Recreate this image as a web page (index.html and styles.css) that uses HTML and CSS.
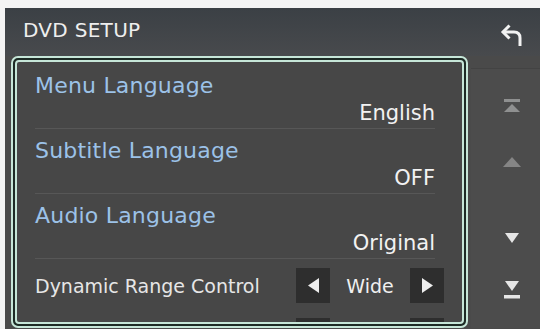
FILE: index.html
```html
<!DOCTYPE html>
<html lang="en">
<head>
  <meta charset="UTF-8" />
  <title>DVD SETUP</title>
  <link rel="stylesheet" href="styles.css">
</head>
<body>
  <div class="screen">
    <header class="header">
      <h1>DVD SETUP</h1>
      <button class="back-btn" aria-label="Back">
        <svg width="26" height="24" viewBox="0 0 26 24">
          <path d="M4 9 H15 Q21 9 21 15 V23" fill="none" stroke="#f2f2f2" stroke-width="3" />
          <path d="M10.5 2.5 L4 9 L10.5 15.5" fill="none" stroke="#f2f2f2" stroke-width="3" />
        </svg>
      </button>
    </header>

    <div class="main">
      <div class="frame">
        <div class="frame-inner">
          <div class="item">
            <div class="label">Menu Language</div>
            <div class="value">English</div>
          </div>
          <div class="item">
            <div class="label">Subtitle Language</div>
            <div class="value">OFF</div>
          </div>
          <div class="item">
            <div class="label">Audio Language</div>
            <div class="value">Original</div>
          </div>
          <div class="item-select">
            <div class="label-small">Dynamic Range Control</div>
            <div class="selector">
              <button class="arrow-btn" aria-label="Previous">
                <svg width="11" height="15" viewBox="0 0 11 15"><path d="M11 0 V15 L0 7.5 Z" fill="#eeeeee"/></svg>
              </button>
              <span class="sel-value">Wide</span>
              <button class="arrow-btn" aria-label="Next">
                <svg width="11" height="15" viewBox="0 0 11 15"><path d="M0 0 V15 L11 7.5 Z" fill="#eeeeee"/></svg>
              </button>
            </div>
          </div>
          <div class="item-select">
            <div class="label-small"></div>
            <div class="selector">
              <button class="arrow-btn"></button>
              <span class="sel-value"></span>
              <button class="arrow-btn"></button>
            </div>
          </div>
        </div>
      </div>

      <div class="scroller">
        <div class="scroll-icon top">
          <svg width="18" height="14" viewBox="0 0 18 14"><rect x="1" y="0" width="16" height="3" fill="#8f9090"/><path d="M9 5 L17 13 H1 Z" fill="#8f9090"/></svg>
        </div>
        <div class="scroll-icon up">
          <svg width="18" height="10" viewBox="0 0 18 10"><path d="M9 0 L18 10 H0 Z" fill="#858585"/></svg>
        </div>
        <div class="scroll-icon down">
          <svg width="14" height="10" viewBox="0 0 14 10"><path d="M0 0 H14 L7 10 Z" fill="#e6e6e6"/></svg>
        </div>
        <div class="scroll-icon bottom">
          <svg width="18" height="18" viewBox="0 0 18 18"><path d="M2 0 H16 L9 10 Z" fill="#e6e6e6"/><rect x="1" y="14" width="16" height="3.5" fill="#e6e6e6"/></svg>
        </div>
      </div>
    </div>
  </div>
</body>
</html>
```

FILE: styles.css
```css
* {
  box-sizing: border-box;
}

body {
  margin: 0;
  background-color: #f4f4f4;
  font-family: "DejaVu Sans", "Open Sans", sans-serif;
  overflow: hidden;
}

.screen {
  margin: 8px 0 0 5px;
  height: 321px;
  background-color: #4a4a4a;
  overflow: hidden;
}

.header {
  height: 48px;
  display: flex;
  align-items: center;
  justify-content: space-between;
  padding: 0 15px 4px 18px;
  background: linear-gradient(#3b4045, #484a4d);
}

.header h1 {
  margin: 0;
  font-size: 20px;
  font-weight: 400;
  color: #eeeeee;
  letter-spacing: 0.3px;
}

.back-btn {
  border: none;
  background: none;
  padding: 0;
  margin-top: 12px;
  cursor: pointer;
}

.main {
  display: flex;
  padding-left: 6px;
}

.frame {
  width: 457px;
  height: 272px;
  border: 2px solid #c6e6d8;
  border-radius: 7px;
  background-color: #1d2b25;
  padding: 2px;
}

.frame-inner {
  height: 100%;
  border: 2px solid #c6e6d8;
  border-radius: 4px;
  background-color: #474747;
  padding: 2px 27px 0 18px;
  overflow: hidden;
}

.item {
  height: 65px;
  padding-top: 8px;
  border-bottom: 1px solid #575757;
}

.label {
  height: 28px;
  line-height: 28px;
  font-size: 22px;
  letter-spacing: 0.2px;
  color: #9cc2e8;
}

.value {
  height: 26px;
  line-height: 26px;
  font-size: 21px;
  color: #f2f2f2;
  text-align: right;
}

.item-select {
  height: 50px;
  display: flex;
  align-items: center;
  justify-content: space-between;
  padding-top: 3px;
  margin-right: -9px;
}

.label-small {
  font-size: 19px;
  color: #e6e6e6;
}

.selector {
  display: flex;
  align-items: center;
}

.arrow-btn {
  width: 34px;
  height: 35px;
  border: none;
  background-color: #2e2e2e;
  padding: 0;
  display: flex;
  align-items: center;
  justify-content: center;
}

.sel-value {
  width: 80px;
  text-align: center;
  font-size: 19px;
  color: #f0f0f0;
}

.scroller {
  flex: 1;
  display: flex;
  flex-direction: column;
  align-items: center;
  margin: 12px 0 0 3px;
  padding: 30px 0 0 12px;
  background-color: #4c4c4c;
  border-top: 1px solid #434343;
}

.scroll-icon {
  display: flex;
}

.scroll-icon.up {
  margin-top: 44px;
}

.scroll-icon.down {
  margin-top: 66px;
}

.scroll-icon.bottom {
  margin-top: 38px;
}
```
